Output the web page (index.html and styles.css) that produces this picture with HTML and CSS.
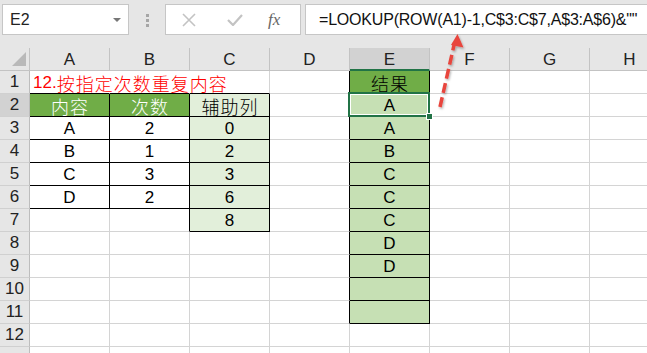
FILE: index.html
```html
<!DOCTYPE html>
<html lang="zh">
<head>
	<meta charset="UTF-8">
	<title>LOOKUP</title>
	<link rel="stylesheet" href="styles.css">
</head>
<body>
	<div id="bar">
		<div class="namebox">E2<span class="drop"></span></div>
		<div class="grip"><i></i><i></i><i></i></div>
		<div class="btns">
			<svg width="14" height="14" viewBox="0 0 14 14"><path d="M1 1L13 13M13 1L1 13" stroke="#c3c3c3" stroke-width="1.6" fill="none"/></svg>
			<svg width="16" height="12" viewBox="0 0 16 12"><path d="M1 6L6 11L15 1" stroke="#c3c3c3" stroke-width="2.2" fill="none"/></svg>
			<span class="fx">fx</span>
		</div>
		<div class="formula">=LOOKUP(ROW(A1)-1,C$3:C$7,A$3:A$6)&amp;""</div>
	</div>

	<div id="sheet">
		<!-- header -->
		<div class="hd corner"><span class="tri"></span></div>
		<div class="hd">A</div><div class="hd">B</div><div class="hd">C</div><div class="hd">D</div>
		<div class="hd on">E</div><div class="hd">F</div><div class="hd">G</div><div class="hd">H</div>

		<!-- 1 -->
		<div class="rh">1</div>
		<div class="c title bb nr">12.<span class="cn">按指定次数重复内容</span></div>
		<div class="c bb nr"></div><div class="c bb"></div><div class="c br"></div>
		<div class="c g br bb"><span class="cn">结果</span></div>
		<div class="c"></div><div class="c"></div><div class="c"></div>

		<!-- 2 -->
		<div class="rh on">2</div>
		<div class="c g w br bb"><span class="cn">内容</span></div>
		<div class="c g w br bb"><span class="cn">次数</span></div>
		<div class="c lg br bb"><span class="cn">辅助列</span></div>
		<div class="c br"></div>
		<div class="c mg br bb sel">A</div>
		<div class="c"></div><div class="c"></div><div class="c"></div>

		<!-- 3 -->
		<div class="rh">3</div>
		<div class="c br bb">A</div><div class="c br bb">2</div><div class="c lg br bb">0</div>
		<div class="c br"></div><div class="c mg br bb">A</div>
		<div class="c"></div><div class="c"></div><div class="c"></div>

		<!-- 4 -->
		<div class="rh">4</div>
		<div class="c br bb">B</div><div class="c br bb">1</div><div class="c lg br bb">2</div>
		<div class="c br"></div><div class="c mg br bb">B</div>
		<div class="c"></div><div class="c"></div><div class="c"></div>

		<!-- 5 -->
		<div class="rh">5</div>
		<div class="c br bb">C</div><div class="c br bb">3</div><div class="c lg br bb">3</div>
		<div class="c br"></div><div class="c mg br bb">C</div>
		<div class="c"></div><div class="c"></div><div class="c"></div>

		<!-- 6 -->
		<div class="rh">6</div>
		<div class="c br bb">D</div><div class="c br bb">2</div><div class="c lg br bb">6</div>
		<div class="c br"></div><div class="c mg br bb">C</div>
		<div class="c"></div><div class="c"></div><div class="c"></div>

		<!-- 7 -->
		<div class="rh">7</div>
		<div class="c"></div><div class="c br"></div><div class="c lg br bb">8</div>
		<div class="c br"></div><div class="c mg br bb">C</div>
		<div class="c"></div><div class="c"></div><div class="c"></div>

		<!-- 8 -->
		<div class="rh">8</div>
		<div class="c"></div><div class="c"></div><div class="c"></div>
		<div class="c br"></div><div class="c mg br bb">D</div>
		<div class="c"></div><div class="c"></div><div class="c"></div>

		<!-- 9 -->
		<div class="rh">9</div>
		<div class="c"></div><div class="c"></div><div class="c"></div>
		<div class="c br"></div><div class="c mg br bb">D</div>
		<div class="c"></div><div class="c"></div><div class="c"></div>

		<!-- 10 -->
		<div class="rh">10</div>
		<div class="c"></div><div class="c"></div><div class="c"></div>
		<div class="c br"></div><div class="c mg br bb"></div>
		<div class="c"></div><div class="c"></div><div class="c"></div>

		<!-- 11 -->
		<div class="rh">11</div>
		<div class="c"></div><div class="c"></div><div class="c"></div>
		<div class="c br"></div><div class="c mg br bb"></div>
		<div class="c"></div><div class="c"></div><div class="c"></div>

		<!-- 12 -->
		<div class="rh">12</div>
		<div class="c"></div><div class="c"></div><div class="c"></div><div class="c"></div>
		<div class="c"></div><div class="c"></div><div class="c"></div><div class="c"></div>

		<!-- 13 -->
		<div class="rh"></div>
		<div class="c"></div><div class="c"></div><div class="c"></div><div class="c"></div>
		<div class="c"></div><div class="c"></div><div class="c"></div><div class="c"></div>
	</div>

	<svg class="arrow" width="647" height="353" viewBox="0 0 647 353">
		<defs>
			<filter id="sh" x="-50%" y="-50%" width="200%" height="200%">
				<feDropShadow dx="1" dy="1.5" stdDeviation="1.2" flood-color="#000" flood-opacity="0.3"/>
			</filter>
		</defs>
		<g filter="url(#sh)">
			<path d="M440 107L454.5 43" stroke="#e8453c" stroke-width="3.5" stroke-dasharray="10 4.5" fill="none"/>
			<path d="M457.5 34L451 45L463.5 47.5Z" fill="#e8453c"/>
		</g>
	</svg>
</body>
</html>
```

FILE: styles.css
```css
body {
	margin: 0;
	width: 647px;
	height: 353px;
	overflow: hidden;
	position: relative;
	background: #fff;
	font-family: "Liberation Sans", "Noto Sans CJK SC", sans-serif;
	color: #000;
}
#bar {
	display: flex;
	align-items: flex-start;
	height: 48px;
	padding: 4px 0 0 2px;
	box-sizing: border-box;
	background: #e6e6e6;
}
.namebox {
	position: relative;
	width: 127px;
	height: 31px;
	box-sizing: border-box;
	border: 1px solid #c6c6c6;
	background: #fff;
	font-size: 16px;
	line-height: 29px;
	padding-left: 7px;
	color: #222;
}
.drop {
	position: absolute;
	right: 7px;
	top: 13px;
	border-left: 4px solid transparent;
	border-right: 4px solid transparent;
	border-top: 4px solid #777;
}
.grip {
	display: flex;
	flex-direction: column;
	gap: 2px;
	margin: 10px 0 0 17px;
	width: 3px;
}
.grip i {
	display: block;
	width: 3px;
	height: 3px;
	background: #a6a6a6;
}
.btns {
	display: flex;
	align-items: center;
	height: 31px;
	width: 136px;
	box-sizing: border-box;
	margin-left: 16px;
	border: 1px solid #c6c6c6;
	background: #fff;
	padding-left: 16px;
	gap: 31px;
}
.fx {
	font-family: "Liberation Serif", serif;
	font-style: italic;
	font-size: 17px;
	color: #666;
	margin-left: -6px;
}
.formula {
	flex: 1;
	height: 31px;
	margin-left: 4px;
	box-sizing: border-box;
	border: 1px solid #c6c6c6;
	border-right: 0;
	background: #fff;
	font-size: 16px;
	letter-spacing: -0.2px;
	line-height: 29px;
	padding-left: 13px;
	white-space: nowrap;
	color: #111;
}
#sheet {
	display: grid;
	grid-template-columns: 30px repeat(8, 80px);
	grid-auto-rows: 23px;
	width: 670px;
}
.hd, .rh, .c {
	box-sizing: border-box;
	border-right: 1px solid #d4d4d4;
	border-bottom: 1px solid #d4d4d4;
	display: flex;
	align-items: center;
	justify-content: center;
	font-size: 17px;
	line-height: 20px;
	white-space: nowrap;
}
.hd {
	background: #e6e6e6;
	border-right-color: #c3c3c3;
	border-bottom-color: #c3c3c3;
	color: #222;
	padding-top: 1px;
}
.hd.on {
	background: #d2d2d2;
	border-bottom: 2px solid #217346;
	padding-top: 2px;
}
.corner {
	position: relative;
}
.tri {
	position: absolute;
	right: 3px;
	bottom: 4px;
	width: 14px;
	height: 14px;
	background: #b9b9b9;
	clip-path: polygon(100% 0, 100% 100%, 0 100%);
}
.rh {
	background: #e6e6e6;
	border-right-color: #bdbdbd;
	border-bottom-color: #d0d0d0;
	color: #222;
}
.rh.on {
	background: #d2d2d2;
}
.c {
	padding-top: 2px;
}
.cn {
	font-family: "Noto Sans CJK SC", sans-serif;
	font-size: 18px;
	font-weight: 300;
	letter-spacing: 1px;
	padding-left: 1px;
	line-height: 18px;
}
.title {
	justify-content: flex-start;
	padding-left: 3px;
	padding-top: 1px;
	color: #f00;
	font-size: 17px;
	line-height: 18px;
	overflow: visible;
}
.title .cn {
	letter-spacing: 1px;
	padding-left: 0;
}
.nr {
	border-right-color: transparent;
}
.br {
	border-right-color: #000;
}
.bb {
	border-bottom-color: #000;
}
.g {
	background: #70ad47;
}
.w {
	color: #fff;
}
.lg {
	background: #e2efda;
}
.mg {
	background: #c6e0b4;
}
.sel {
	position: relative;
}
.sel::after {
	content: "";
	position: absolute;
	top: -2px;
	left: -2px;
	right: -1px;
	bottom: -1px;
	border: 2px solid #217346;
	box-shadow: inset 0 0 0 1px #fff;
	z-index: 2;
}
.sel::before {
	content: "";
	position: absolute;
	right: -4px;
	bottom: -4px;
	width: 5px;
	height: 5px;
	background: #217346;
	border: 1px solid #fff;
	z-index: 3;
}
.arrow {
	position: absolute;
	top: 0;
	left: 0;
	pointer-events: none;
}
```
